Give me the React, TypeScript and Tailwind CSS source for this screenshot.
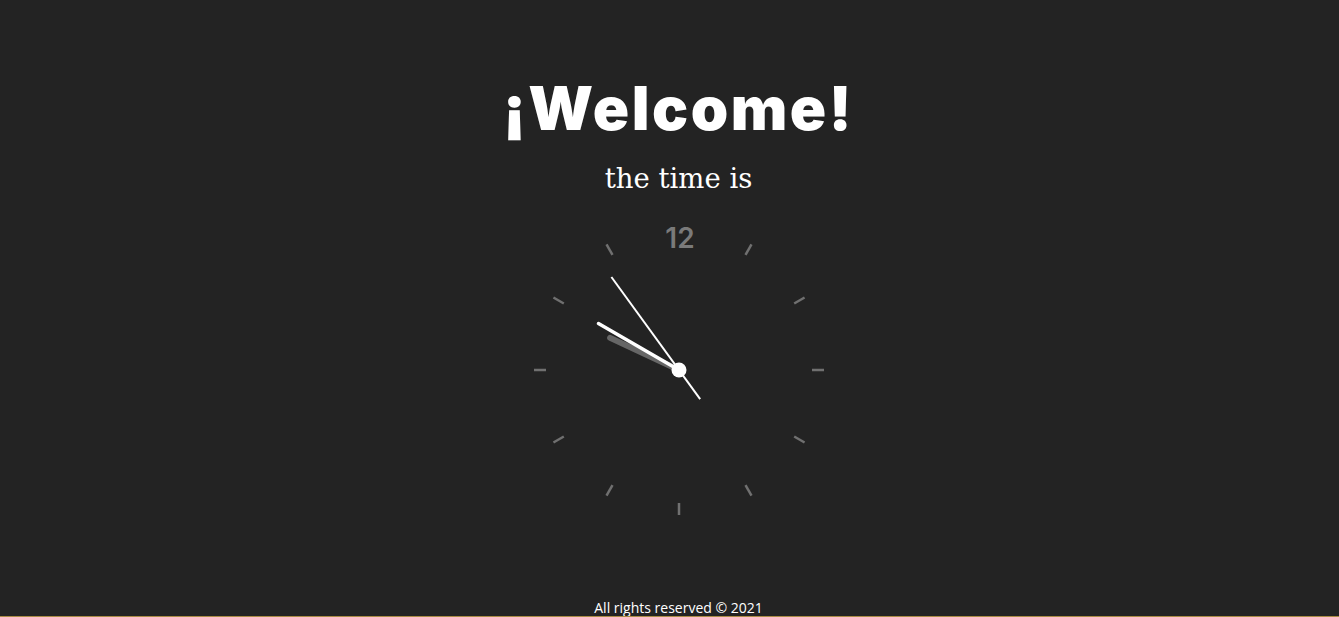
import React from "react";

const ticks = [30, 60, 90, 120, 150, 180, 210, 240, 270, 300, 330];

function point(deg: number, r: number) {
  const rad = (deg * Math.PI) / 180;
  return { x: 150 + r * Math.sin(rad), y: 150 - r * Math.cos(rad) };
}

function Hand({
  deg,
  len,
  tail = 0,
  width,
  color,
  cap = "round",
}: {
  deg: number;
  len: number;
  tail?: number;
  width: number;
  color: string;
  cap?: "round" | "butt";
}) {
  const a = point(deg, len);
  const b = point(deg + 180, tail);
  return (
    <line
      x1={b.x}
      y1={b.y}
      x2={a.x}
      y2={a.y}
      stroke={color}
      strokeWidth={width}
      strokeLinecap={cap}
    />
  );
}

function Clock() {
  return (
    <svg width="300" height="300" viewBox="0 0 300 300" className="block">
      <text
        x="151"
        y="28"
        textAnchor="middle"
        fontSize="28"
        fontWeight="600"
        fill="#7a7a7a"
        fontFamily="Inter, sans-serif"
      >
        12
      </text>
      {ticks.map((t) => {
        const a = point(t, 133);
        const b = point(t, 145);
        return (
          <line
            key={t}
            x1={a.x}
            y1={a.y}
            x2={b.x}
            y2={b.y}
            stroke="#707070"
            strokeWidth="2.5"
          />
        );
      })}
      {/* hour */}
      <Hand deg={295} len={76} width={6} color="#666666" />
      {/* minute */}
      <Hand deg={300} len={93} width={3.5} color="#ffffff" />
      {/* second */}
      <Hand deg={324} len={115} tail={36} width={2} color="#ffffff" cap="butt" />
      <circle cx="150" cy="150" r="7.5" fill="#ffffff" />
    </svg>
  );
}

export default function App() {
  return (
    <div className="h-screen bg-[#232323] flex flex-col items-center overflow-hidden pl-[18px] border-b border-[#a98c45]">
      <h1 className="mt-[78px] text-[60px] leading-[60px] font-black text-white tracking-[2.5px] font-['Inter',sans-serif]">
        ¡Welcome!
      </h1>
      <p className="mt-[22px] text-[27.5px] leading-[36px] text-white font-['DejaVu_Serif',serif]">
        the time is
      </p>
      <div className="mt-6">
        <Clock />
      </div>
      <footer className="mt-auto -mb-[3px]">
        <span className="text-[14px] leading-[16px] text-white font-['Open_Sans',sans-serif]">
          All rights reserved © 2021
        </span>
      </footer>
    </div>
  );
}
